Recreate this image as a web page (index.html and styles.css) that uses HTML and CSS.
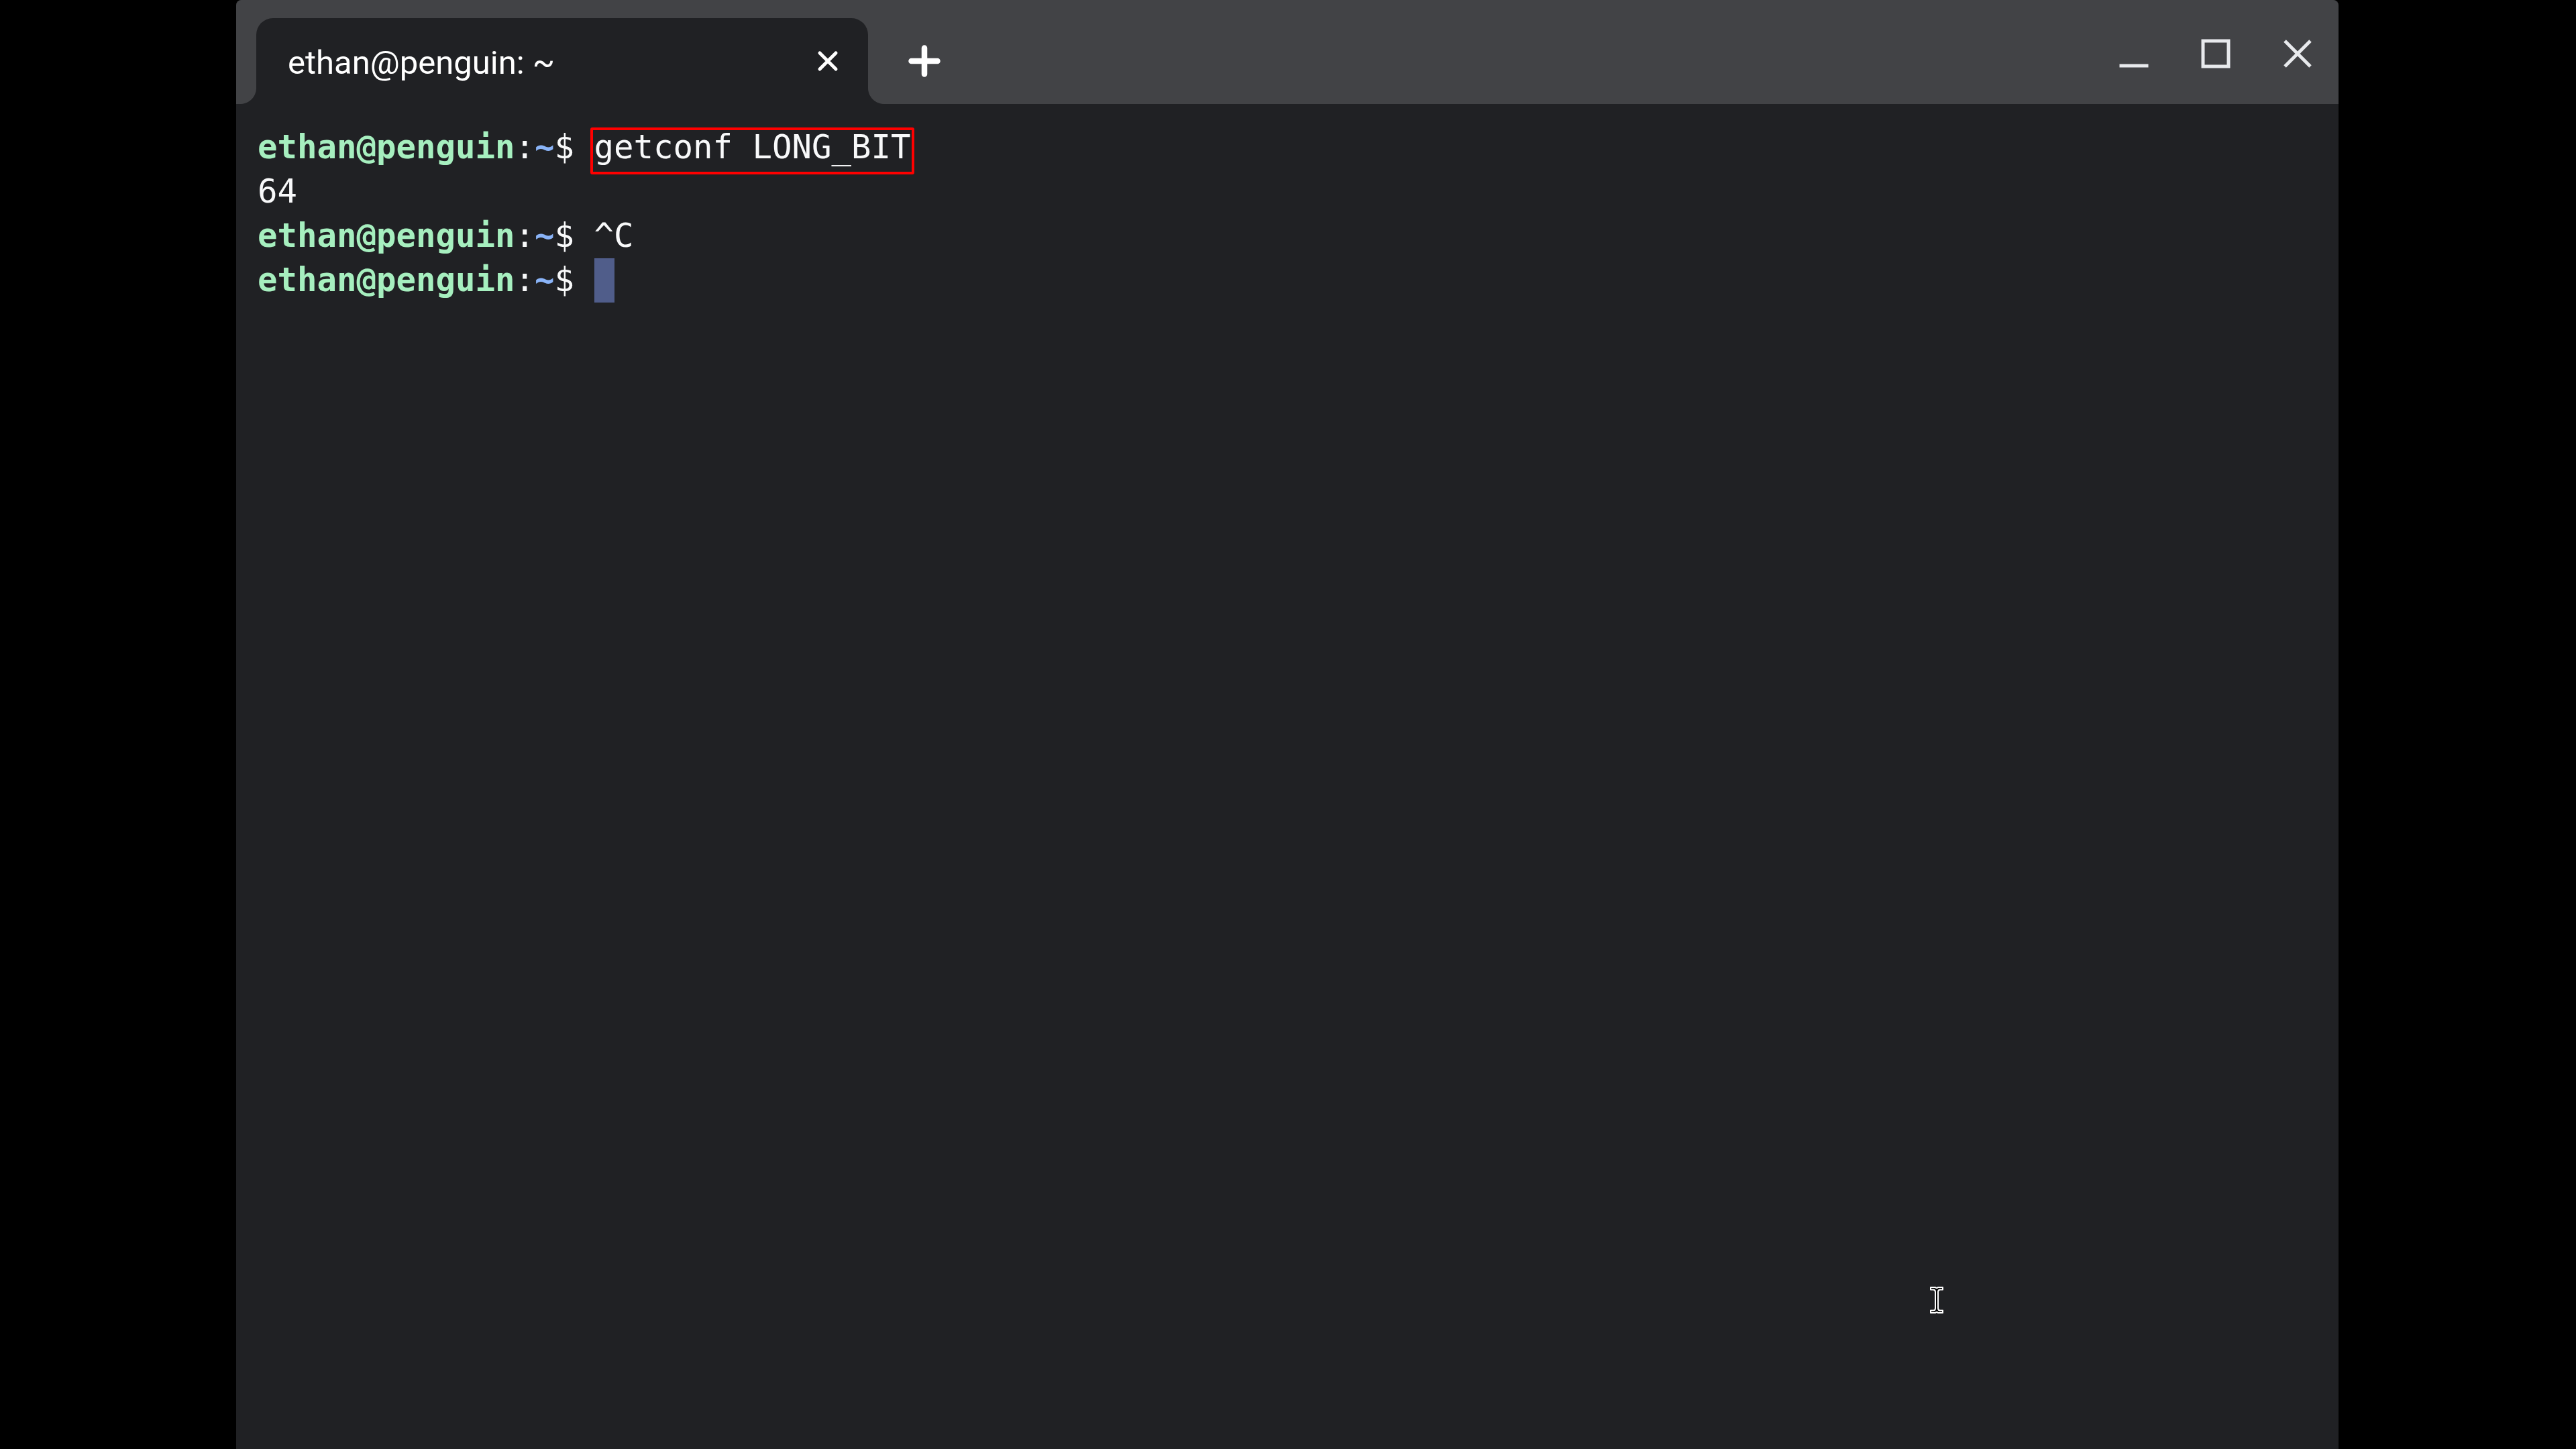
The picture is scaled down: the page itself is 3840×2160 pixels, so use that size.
FILE: index.html
```html
<!DOCTYPE html>
<html>
<head>
<meta charset="utf-8">
<title>ethan@penguin: ~</title>
<link rel="stylesheet" href="styles.css">
</head>
<body>
<div class="window">
  <div class="titlebar">
    <div class="tab">
      <span class="tab-title">ethan@penguin: ~</span>
      <svg class="tab-close" width="32" height="32" viewBox="0 0 32 32"><path d="M4 4L28 28M28 4L4 28" stroke="#ffffff" stroke-width="5" stroke-linecap="round" fill="none"/></svg>
    </div>
    <div class="newtab">
      <svg width="48" height="48" viewBox="0 0 48 48"><path d="M24 4.5V43.5M4.5 24H43.5" stroke="#ffffff" stroke-width="8.5" stroke-linecap="round" fill="none"/></svg>
    </div>
    <div class="spacer"></div>
    <div class="ctrl">
      <svg width="44" height="44" viewBox="0 0 44 44"><rect x="0.5" y="37.5" width="43" height="5" fill="#e8eaed"/></svg>
    </div>
    <div class="ctrl">
      <svg width="44" height="44" viewBox="0 0 44 44"><rect x="3" y="3" width="38" height="38" stroke="#e8eaed" stroke-width="5" fill="none"/></svg>
    </div>
    <div class="ctrl">
      <svg width="44" height="44" viewBox="0 0 44 44"><path d="M3 3L41 41M41 3L3 41" stroke="#e8eaed" stroke-width="5" fill="none"/></svg>
    </div>
  </div>
  <div class="term">
    <div class="line"><span class="user">ethan@penguin</span><span class="sep">:</span><span class="dir">~</span><span class="sep">$ </span><span class="cmd">getconf LONG_BIT</span></div>
    <div class="line">64</div>
    <div class="line"><span class="user">ethan@penguin</span><span class="sep">:</span><span class="dir">~</span><span class="sep">$ </span>^C</div>
    <div class="line"><span class="user">ethan@penguin</span><span class="sep">:</span><span class="dir">~</span><span class="sep">$ </span><span class="cursor"></span></div>
  </div>
</div>
<svg class="ibeam" width="22" height="42" viewBox="0 0 22 42"><path d="M2 2H9Q11 4 13 2H20V5.5H16Q13 5.5 13 9V33Q13 36.5 16 36.5H20V40H13Q11 38 9 40H2V36.5H6Q9 36.5 9 33V9Q9 5.5 6 5.5H2Z" fill="#000000" stroke="#ffffff" stroke-width="2" stroke-linejoin="round"/></svg>
</body>
</html>
```

FILE: styles.css
```css
html, body {
  margin: 0;
  padding: 0;
}
body {
  background: #000000;
  width: 3840px;
  height: 2160px;
  overflow: hidden;
  position: relative;
}
.window {
  margin-left: 352px;
  width: 3134px;
  height: 2160px;
  background: #202124;
  border-radius: 8px 8px 0 0;
  display: flex;
  flex-direction: column;
}
.titlebar {
  height: 155px;
  background: #424346;
  border-radius: 8px 8px 0 0;
  display: flex;
  flex-shrink: 0;
}
.tab {
  position: relative;
  align-self: flex-end;
  margin-left: 30px;
  width: 912px;
  height: 128px;
  box-sizing: border-box;
  padding-left: 47px;
  padding-top: 4px;
  background: #202124;
  border-radius: 25px 25px 0 0;
  display: flex;
  align-items: center;
}
.tab::before,
.tab::after {
  content: "";
  position: absolute;
  bottom: 0;
  width: 24px;
  height: 24px;
}
.tab::before {
  left: -24px;
  background: radial-gradient(circle at 0 0, transparent 23.5px, #202124 24.5px);
}
.tab::after {
  right: -24px;
  background: radial-gradient(circle at 100% 0, transparent 23.5px, #202124 24.5px);
}
.tab-title {
  font-family: Roboto, "Noto Sans", sans-serif;
  font-size: 49px;
  color: #ffffff;
  white-space: pre;
}
.tab-close {
  margin-left: auto;
  margin-right: 44px;
  margin-top: -4px;
}
.newtab {
  width: 100px;
  margin-left: 34px;
  box-sizing: border-box;
  padding-top: 27px;
  display: flex;
  align-items: center;
  justify-content: center;
}
.spacer {
  flex: 1;
}
.ctrl {
  width: 122px;
  box-sizing: border-box;
  padding-top: 58px;
  display: flex;
  justify-content: center;
  align-items: flex-start;
}
.term {
  padding: 32px 32px;
  font-family: "DejaVu Sans Mono", "Liberation Mono", monospace;
  font-size: 49px;
  line-height: 66px;
  color: #f8f9fa;
}
.line {
  white-space: pre;
  height: 66px;
}
.user {
  color: #a6efbf;
  font-weight: bold;
}
.dir {
  color: #8ab4f8;
  font-weight: bold;
}
.sep {
  color: #f8f9fa;
}
.cmd {
  position: relative;
}
.cmd::after {
  content: "";
  position: absolute;
  left: -6px;
  right: -5px;
  top: -1px;
  bottom: -12px;
  border: 4px solid #ff0000;
  border-radius: 3px;
}
.cursor {
  display: inline-block;
  width: 30px;
  height: 66px;
  vertical-align: top;
  background: #505d8a;
}
.ibeam {
  position: absolute;
  left: 2876px;
  top: 1917px;
}
```
